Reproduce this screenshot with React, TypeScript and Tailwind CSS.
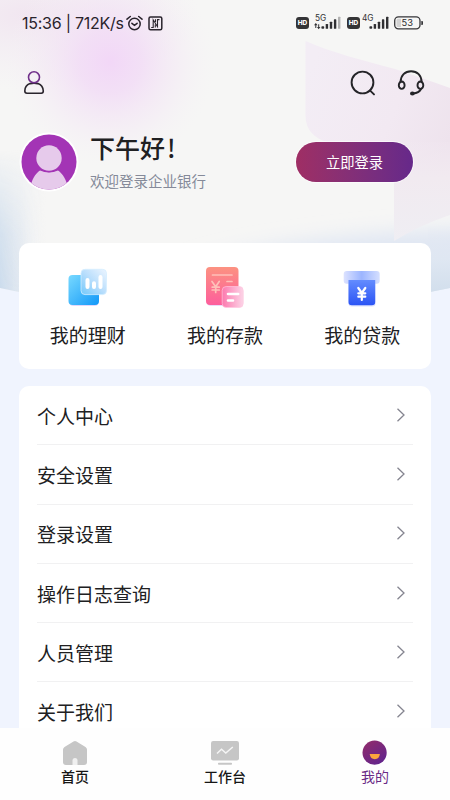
import React from 'react';

function Backdrop() {
  return (
    <svg className="absolute left-0 top-0" width="450" height="300" viewBox="0 0 450 300">
      <defs>
        <radialGradient id="lilac" cx="110" cy="62" r="105" gradientUnits="userSpaceOnUse">
          <stop offset="0" stopColor="#f2d7f7" />
          <stop offset=".3" stopColor="#f2dcf6" stopOpacity=".85" />
          <stop offset=".65" stopColor="#f3e4f5" stopOpacity=".4" />
          <stop offset="1" stopColor="#f5f0f5" stopOpacity="0" />
        </radialGradient>
        <radialGradient id="rose" cx="0" cy="0" r="1" gradientTransform="translate(30 15) scale(170 75)" gradientUnits="userSpaceOnUse">
          <stop offset="0" stopColor="#f1e5f0" />
          <stop offset="1" stopColor="#f3edf4" stopOpacity="0" />
        </radialGradient>
        <linearGradient id="leftBlue" x1="0" x2="46" y1="0" y2="0" gradientUnits="userSpaceOnUse">
          <stop offset="0" stopColor="#cbdbec" />
          <stop offset=".45" stopColor="#dbe4ef" stopOpacity=".75" />
          <stop offset="1" stopColor="#f2f3f6" stopOpacity="0" />
        </linearGradient>
        <linearGradient id="leftMaskFill" x1="0" x2="0" y1="150" y2="290" gradientUnits="userSpaceOnUse">
          <stop offset="0" stopColor="#000" />
          <stop offset=".6" stopColor="#ccc" />
          <stop offset="1" stopColor="#fff" />
        </linearGradient>
        <mask id="leftMask">
          <rect width="60" height="300" fill="url(#leftMaskFill)" />
        </mask>
        <linearGradient id="bottomBlue" x1="0" x2="0" y1="225" y2="294" gradientUnits="userSpaceOnUse">
          <stop offset="0" stopColor="#e4e9f3" stopOpacity="0" />
          <stop offset=".5" stopColor="#dfe7f2" />
          <stop offset="1" stopColor="#d1deec" />
        </linearGradient>
        <linearGradient id="petal" x1="305" x2="450" y1="80" y2="140" gradientUnits="userSpaceOnUse">
          <stop offset="0" stopColor="#f3edf5" />
          <stop offset=".6" stopColor="#f2e9f2" />
          <stop offset="1" stopColor="#eee3ed" />
        </linearGradient>
        <linearGradient id="petalLow" x1="0" x2="0" y1="135" y2="242" gradientUnits="userSpaceOnUse">
          <stop offset="0" stopColor="#f2e9f2" stopOpacity="0" />
          <stop offset=".4" stopColor="#f1eaf0" />
          <stop offset="1" stopColor="#efeef3" />
        </linearGradient>
        <clipPath id="hero">
          <path d="M0 0H450V288L430 292H19L0 288Z" />
        </clipPath>
        <filter id="soft" x="-20%" y="-60%" width="140%" height="220%">
          <feGaussianBlur stdDeviation="10" />
        </filter>
      </defs>
      <g clipPath="url(#hero)">
        <rect width="450" height="300" fill="#f6f6f5" />
        <rect width="450" height="200" fill="url(#rose)" />
        <rect width="450" height="200" fill="url(#lilac)" />
        <rect width="60" height="300" fill="url(#leftBlue)" mask="url(#leftMask)" />
        <path d="M190 266Q280 236 480 228V320H190Z" fill="#dfe6f3" filter="url(#soft)" />
        <path d="M305.500 41C330 52 365 61 395 69Q425 79 450 88V178H394V143H330Q306 137 305.500 116Z" fill="url(#petal)" />
        <path d="M394 142H450V215Q420 225 394 241Z" fill="url(#petalLow)" />
        <rect x="428" y="215" width="22" height="80" fill="url(#bottomBlue)" />
      </g>
    </svg>
  );
}

function AlarmIcon() {
  return (
    <svg width="17" height="17" viewBox="0 0 17 17" fill="none" stroke="#29232c" strokeWidth="1.500" strokeLinecap="round">
      <circle cx="8.500" cy="9" r="5.700" />
      <path d="M1 4.200 4.300 1.500M12.700 1.500 16 4.200M5.900 8.300 8.500 10.400 11.100 8.300" />
    </svg>
  );
}

function NfcIcon() {
  return (
    <svg width="15" height="15" viewBox="0 0 15 15" fill="none" stroke="#29232c">
      <rect x="1" y="1" width="12.800" height="12.800" rx="1.500" strokeWidth="1.500" />
      <path d="M3.200 11.500H5.200V3.800L9.500 10.700V3.600H11.500M7.300 11.500V8.500M7.500 3.300V6" strokeWidth="1.100" />
    </svg>
  );
}

function HdBadge() {
  return (
    <span className="flex h-[12px] w-[13px] items-center justify-center rounded-[3px] bg-[#343436] font-['Inter'] text-[6.5px] font-extrabold leading-none text-white">
      HD
    </span>
  );
}

function Signal({ label, data }: { label: string; data?: boolean }) {
  return (
    <svg width="28" height="18" viewBox="0 0 28 18" fill="#303033">
      <text x={data ? 1 : 0} y="7.500" fontFamily="Inter, sans-serif" fontSize="8.300">
        {label}
      </text>
      {data && <path d="M1.800 10 3.600 12.200H2.300V15H1.300V12.200H0ZM4.200 11.300H5.200V14H6.400L4.700 16.200 3 14H4.200Z" />}
      <rect x="7.400" y="13.200" width="2.800" height="2.600" rx=".8" />
      <rect x="11.700" y="11" width="2.400" height="4.800" rx=".6" />
      <rect x="15.800" y="8.700" width="2.400" height="7.100" rx=".6" />
      <rect x="19.900" y="6.300" width="2.400" height="9.500" rx=".6" />
      <rect x="24" y="3.700" width="2.400" height="12.100" rx=".6" opacity={data ? 0.35 : 1} />
    </svg>
  );
}

function Battery() {
  return (
    <svg width="30" height="14" viewBox="0 0 30 14">
      <rect x=".7" y=".9" width="25.300" height="12" rx="3.800" fill="none" stroke="#353538" strokeWidth="1.300" />
      <path d="M4 2.800H7V11H4Q2.500 11 2.500 9.500V4.300Q2.500 2.800 4 2.800Z" fill="#d3d3d3" />
      <path d="M27.300 4.900h.8q.9 0 .9.900v2.300q0 .9-.9.900h-.8Z" fill="#353538" />
      <text x="13.300" y="10.200" textAnchor="middle" fontFamily="Inter, sans-serif" fontSize="9.300" fill="#29292c">53</text>
    </svg>
  );
}

function StatusBar() {
  return (
    <div className="flex h-[46px] items-center pl-[22px] pr-[26px] text-[#29232c]">
      <span className="w-[104px] whitespace-nowrap font-['Inter'] text-[16px] leading-none tracking-[-0.25px]">15:36 | 712K/s</span>
      <AlarmIcon />
      <span className="ml-[5px]"><NfcIcon /></span>
      <span className="ml-auto"><HdBadge /></span>
      <span className="ml-[5px] mt-[-2px]"><Signal label="5G" data /></span>
      <span className="ml-[5px]"><HdBadge /></span>
      <span className="ml-[2px] mt-[-2px]"><Signal label="4G" /></span>
      <span className="ml-[4px]"><Battery /></span>
    </div>
  );
}

function UserIcon() {
  return (
    <svg width="22" height="24" viewBox="0 0 22 24" fill="none" strokeWidth="1.600">
      <path d="M7 12.600Q2 14.300 1.800 20Q1.800 22.200 4 22.200H18.300Q20.300 22.200 20.300 20Q20 14.500 15 12.600Q11 11.600 7 12.600Z" stroke="#29242c" />
      <circle cx="11" cy="6.300" r="5.500" stroke="#70308a" />
    </svg>
  );
}

function SearchIcon() {
  return (
    <svg width="26" height="26" viewBox="0 0 26 26" fill="none" stroke="#242428" strokeWidth="1.900" strokeLinecap="round">
      <circle cx="12.500" cy="12.500" r="10.900" />
      <path d="m19.900 20.400 4.100 4" />
    </svg>
  );
}

function HeadsetIcon() {
  return (
    <svg width="28" height="26" viewBox="0 0 28 26" fill="none" stroke="#242428" strokeWidth="1.900" strokeLinecap="round">
      <path d="M3.600 12.200C3.600 5.300 8 1.300 14.100 1.300S24.600 5.300 24.600 12.200M24 19Q22.200 22.900 16 23.500" />
      <ellipse cx="4.700" cy="15.200" rx="2.900" ry="3.700" />
      <ellipse cx="23.400" cy="15.200" rx="2.900" ry="3.700" />
      <ellipse cx="15.400" cy="23.400" rx="2.400" ry="2" fill="#242428" stroke="none" />
    </svg>
  );
}

function Avatar() {
  return (
    <svg width="60" height="60" viewBox="0 0 60 60">
      <defs>
        <clipPath id="face"><circle cx="30" cy="30" r="27.500" /></clipPath>
      </defs>
      <circle cx="30" cy="30" r="29.500" fill="#fff" />
      <g clipPath="url(#face)">
        <rect width="60" height="60" fill="#a334b5" />
        <path d="M10.500 60C12 48 16 42 21 38.500Q30 42.500 39 38.500C44 42 48 48 50 60Z" fill="#e6caeb" />
        <circle cx="30" cy="26.500" r="13.700" fill="#a334b5" />
        <circle cx="30" cy="26" r="12.700" fill="#e6caeb" />
      </g>
    </svg>
  );
}

function WealthIcon() {
  return (
    <svg width="48" height="48" viewBox="0 0 48 48">
      <defs>
        <linearGradient id="wBase" x1="0" y1="0" x2="1" y2="1">
          <stop stopColor="#78d9ff" /><stop offset="1" stopColor="#1298f8" />
        </linearGradient>
        <linearGradient id="wGlass" x1="0" y1="1" x2="1" y2="0">
          <stop stopColor="#72c9fb" /><stop offset=".5" stopColor="#b9defc" /><stop offset="1" stopColor="#edf5ff" />
        </linearGradient>
      </defs>
      <rect x="5.500" y="15" width="29" height="28" rx="4" fill="#cdbdf8" opacity=".6" />
      <rect x="4.500" y="12" width="30.500" height="30" rx="4" fill="url(#wBase)" />
      <rect x="17" y="6.300" width="25.500" height="25.300" rx="4" fill="url(#wGlass)" stroke="#d4eeff" strokeWidth=".8" />
      <path d="M23.500 17V24M30 20.300V24M36.500 14V24" stroke="#fff" strokeWidth="4" strokeLinecap="round" />
    </svg>
  );
}

function DepositIcon() {
  return (
    <svg width="48" height="48" viewBox="0 0 48 48">
      <defs>
        <linearGradient id="dBase" x1="0" y1="0" x2="0" y2="1">
          <stop stopColor="#fc9281" /><stop offset="1" stopColor="#fd5e9c" />
        </linearGradient>
        <linearGradient id="dGlass" x1="0" y1="0" x2="1" y2="0">
          <stop stopColor="#fc79ae" /><stop offset="1" stopColor="#fcd4e7" />
        </linearGradient>
      </defs>
      <rect x="6" y="8" width="31" height="35" rx="4" fill="#d4b7f2" opacity=".5" />
      <rect x="5" y="4" width="32.500" height="38" rx="4" fill="url(#dBase)" />
      <path d="M11.500 12H31M26 18.500H31M11 18.500l3.700 5.300 3.500-5.300M11.200 24.200H18.200M11.200 27H18.200M14.700 24V29.500" fill="none" stroke="#fec0b9" strokeWidth="1.700" strokeLinecap="round" />
      <rect x="21.200" y="23.500" width="21" height="21" rx="4" fill="url(#dGlass)" stroke="#ffc5df" strokeWidth=".7" />
      <path d="M27 31H37.200M27 37.500H32" stroke="#fff" strokeWidth="2.600" strokeLinecap="round" />
    </svg>
  );
}

function LoanIcon() {
  return (
    <svg width="48" height="48" viewBox="0 0 48 48">
      <defs>
        <linearGradient id="lBase" x1="0" y1="0" x2="0" y2="1">
          <stop stopColor="#638cff" /><stop offset="1" stopColor="#2b54f4" />
        </linearGradient>
        <linearGradient id="lSlot" x1="0" y1="0" x2="1" y2="0">
          <stop stopColor="#dce2ff" /><stop offset=".5" stopColor="#9cb5ff" /><stop offset="1" stopColor="#d5dfff" />
        </linearGradient>
      </defs>
      <rect x="5.700" y="8" width="36" height="12.800" rx="3" fill="url(#lSlot)" />
      <rect x="10.500" y="18" width="27" height="25.500" rx="3" fill="#c6cdfc" opacity=".6" />
      <path d="M10.500 17H37.200V39Q37.200 42.300 33.900 42.300H13.800Q10.500 42.300 10.500 39Z" fill="url(#lBase)" />
      <path d="M20.300 25l3.500 5 3.500-5M20.300 30.300H27.300M20.300 33.700H27.300M23.800 30V37" fill="none" stroke="#fff" strokeWidth="2.200" strokeLinecap="round" />
    </svg>
  );
}

const shortcuts = [
  { label: '我的理财', icon: <WealthIcon /> },
  { label: '我的存款', icon: <DepositIcon /> },
  { label: '我的贷款', icon: <LoanIcon /> },
];

const menu = ['个人中心', '安全设置', '登录设置', '操作日志查询', '人员管理', '关于我们'];

function HomeIcon() {
  return (
    <svg width="26" height="26" viewBox="0 0 26 26">
      <path d="M13 1Q13.800 1 14.500 1.500L23.500 7Q25 8 25 9.500V22Q25 25 22 25H4Q1 25 1 22V9.500Q1 8 2.500 7L11.500 1.500Q12.200 1 13 1Z" fill="#c6c6c6" />
      <path d="M10.500 25V20.500Q10.500 18 13 18T15.500 20.500V25Z" fill="#f0f0f0" />
    </svg>
  );
}

function DeskIcon() {
  return (
    <svg width="28" height="26" viewBox="0 0 28 26">
      <rect x="0" y="1" width="28" height="19.500" rx="2.200" fill="#c6c6c6" />
      <rect x="7" y="22.700" width="14" height="2" rx=".8" fill="#c6c6c6" />
      <path d="m6 13.500 4.500-4.200 4.300 3.700 7-6" fill="none" stroke="#f5f5f5" strokeWidth="1.500" />
    </svg>
  );
}

function MineIcon() {
  return (
    <svg width="26" height="26" viewBox="0 0 26 26">
      <defs>
        <linearGradient id="mine" x1="0" y1="0" x2=".7" y2="1">
          <stop stopColor="#932c69" /><stop offset="1" stopColor="#63248c" />
        </linearGradient>
      </defs>
      <circle cx="12.600" cy="12.700" r="12.100" fill="url(#mine)" />
      <path d="M7.700 14H17.900Q17.200 19.200 12.800 19.200T7.700 14Z" fill="#fba53c" />
    </svg>
  );
}

const tabs = [
  { label: '首页', icon: <HomeIcon />, color: 'font-medium text-[#161616]' },
  { label: '工作台', icon: <DeskIcon />, color: 'font-medium text-[#161616]' },
  { label: '我的', icon: <MineIcon />, color: 'text-[#6b2b86]' },
];

export default function App() {
  return (
    <div className="relative flex h-[800px] w-[450px] flex-col overflow-hidden bg-[#f0f4fe] font-['Noto_Sans_CJK_SC',sans-serif] text-[#202022]">
      <Backdrop />
      <div className="relative flex min-h-0 flex-1 flex-col">
        <StatusBar />
        <header className="flex h-[74px] items-center pl-[23px] pr-[25px]">
          <UserIcon />
          <span className="ml-auto"><SearchIcon /></span>
          <span className="ml-[21px]"><HeadsetIcon /></span>
        </header>
        <section className="flex h-[123px] items-start pl-[19px] pr-[37px] pt-[12px]">
          <Avatar />
          <div className="ml-[11px]">
            <h1 className="flex h-[31px] items-center text-[25px] font-medium leading-none">下午好<span className="ml-[2px]">!</span></h1>
            <p className="mt-[3px] flex h-[31px] items-center text-[14.5px] leading-none text-[#858a99]">欢迎登录企业银行</p>
          </div>
          <button className="ml-auto mt-[10px] h-[40px] w-[117px] rounded-full bg-linear-to-r from-[#9f2e64] to-[#66288a] text-[14.3px] leading-none text-white ring-1 ring-white/60">立即登录</button>
        </section>
        <section className="mx-[19px] grid h-[126px] shrink-0 grid-cols-3 rounded-[10px] bg-white">
          {shortcuts.map((s) => (
            <div key={s.label} className="flex flex-col items-center pt-[20px]">
              {s.icon}
              <span className="mt-[14px] text-[19px] leading-[20px]">{s.label}</span>
            </div>
          ))}
        </section>
        <section className="mx-[19px] mt-[17px] min-h-0 flex-1 overflow-hidden rounded-t-[10px] bg-white px-[18px]">
          {menu.map((m) => (
            <div key={m} className="flex h-[59.3px] items-center justify-between border-b-[1.5px] border-[#f1f1f2] text-[19px] leading-none">
              <span>{m}</span>
              <svg className="mr-[7px] mt-[-1px]" width="10" height="14" viewBox="0 0 10 14" fill="none" stroke="#858590" strokeWidth="1.300">
                <path d="M1.500.8 8 7l-6.500 6.200" />
              </svg>
            </div>
          ))}
        </section>
      </div>
      <nav className="relative flex h-[72px] shrink-0 bg-[#fefefe]">
        {tabs.map((t) => (
          <div key={t.label} className={`flex flex-1 flex-col items-center pt-[12px] text-[14px] leading-none ${t.color}`}>
            {t.icon}
            <span className="mt-[3px]">{t.label}</span>
          </div>
        ))}
      </nav>
    </div>
  );
}
